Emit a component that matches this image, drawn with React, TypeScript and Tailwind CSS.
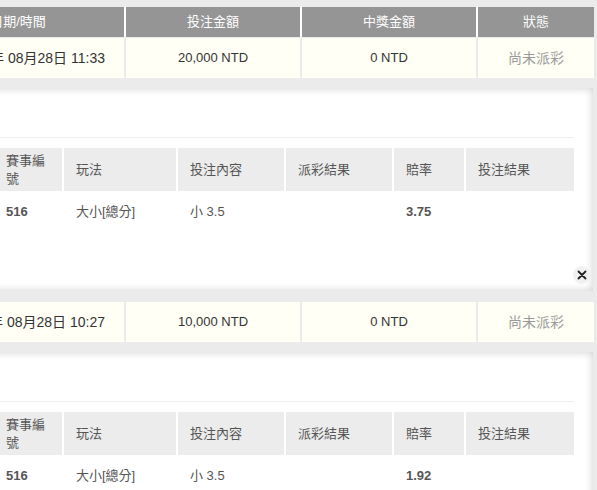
import React from "react";

type Bet = { date: string; amount: string; odds: string };

const bets: Bet[] = [
  { date: "2023年 08月28日 11:33", amount: "20,000 NTD", odds: "3.75" },
  { date: "2023年 08月28日 10:27", amount: "10,000 NTD", odds: "1.92" },
];

function CloseButton() {
  return (
    <div className="absolute right-[2px] bottom-[7px] w-[18px] h-[18px] rounded-full bg-[#f1f1f1] flex items-center justify-center">
      <svg width="10" height="10" viewBox="0 0 10 10">
        <path d="M1.5 1.5 L8.5 8.5 M8.5 1.5 L1.5 8.5" stroke="#222" strokeWidth="1.8" strokeLinecap="round" />
      </svg>
    </div>
  );
}

function SummaryRow({ bet }: { bet: Bet }) {
  return (
    <div className="grid grid-cols-[212px_174px_174px_116px] gap-x-[2px] -ml-[88px] w-[682px]">
      <div className="h-[40px] bg-[#fffff5] flex items-center justify-end pr-[19px] text-[14px] text-[#333] whitespace-nowrap">
        {bet.date}
      </div>
      <div className="h-[40px] bg-[#fffff5] flex items-center justify-center text-[13px] text-[#333]">
        {bet.amount}
      </div>
      <div className="h-[40px] bg-[#fffff5] flex items-center justify-center text-[13px] text-[#333]">
        0 NTD
      </div>
      <div className="h-[40px] bg-[#fffff5] flex items-center justify-center text-[14px] text-[#9a9a9a]">
        尚未派彩
      </div>
    </div>
  );
}

function DetailCard({ bet, showClose }: { bet: Bet; showClose: boolean }) {
  const head = "bg-[#ececec] h-[43px] px-[12px] flex items-center text-[13px] leading-[18px] text-[#555]";
  const cell = "px-[12px] pt-[12px] text-[13px] leading-[18px] text-[#555]";
  return (
    <div className="relative -ml-[20px] w-[613px] h-[203px] bg-white shadow-[inset_0_0_9px_rgba(0,0,0,0.2)] pt-[49px] pl-[14px] pr-[19px]">
      <div className="border-t border-[#eeeeee]" />
      <div className="mt-[10px] grid grid-cols-[68px_112px_106px_106px_70px_108px] gap-x-[2px]">
        <div className={head}>賽事編號</div>
        <div className={head}>玩法</div>
        <div className={head}>投注內容</div>
        <div className={head}>派彩結果</div>
        <div className={head}>賠率</div>
        <div className={head}>投注結果</div>
        <div className={`${cell} font-bold text-[#444]`}>516</div>
        <div className={cell}>大小[總分]</div>
        <div className={cell}>小 3.5</div>
        <div className={cell}></div>
        <div className={`${cell} font-bold text-[#444]`}>{bet.odds}</div>
        <div className={cell}></div>
      </div>
      {showClose && <CloseButton />}
    </div>
  );
}

export default function App() {
  return (
    <div className="w-[597px] h-[490px] overflow-hidden bg-[#ebebeb] font-['Liberation_Sans','Noto_Sans_CJK_TC',sans-serif]">
      <div className="pt-[7px]">
        <div className="grid grid-cols-[212px_174px_174px_116px] gap-x-[2px] -ml-[88px] w-[682px] bg-white">
          {["日期/時間", "投注金額", "中獎金額", "狀態"].map((h) => (
            <div key={h} className="h-[30px] bg-[#959595] text-white text-[13px] flex items-center justify-center">
              {h}
            </div>
          ))}
        </div>
        <div className="mt-[1px]">
          <SummaryRow bet={bets[0]} />
        </div>
        <div className="mt-[10px]">
          <DetailCard bet={bets[0]} showClose={true} />
        </div>
        <div className="mt-[11px]">
          <SummaryRow bet={bets[1]} />
        </div>
        <div className="mt-[10px]">
          <DetailCard bet={bets[1]} showClose={false} />
        </div>
      </div>
    </div>
  );
}
